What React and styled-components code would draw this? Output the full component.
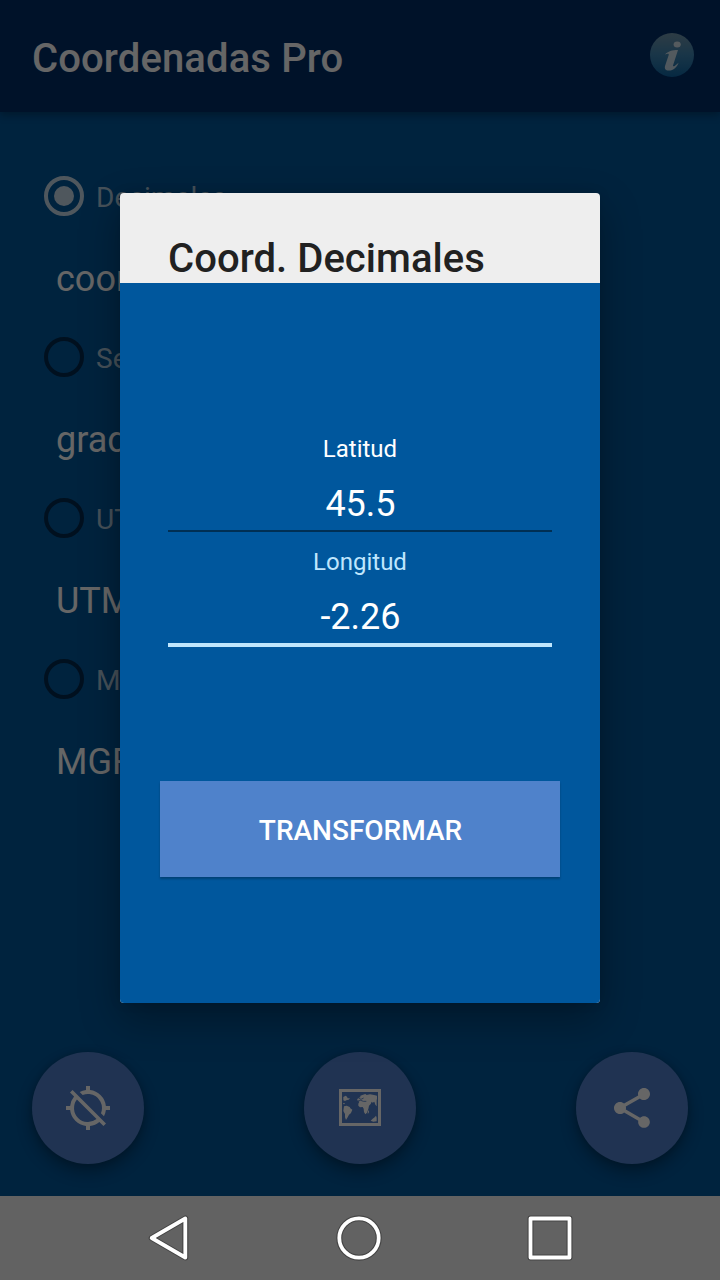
import React, { useState } from "react";
import styled, { createGlobalStyle } from "styled-components";
import { MdLocationDisabled, MdShare } from "react-icons/md";

const options = [
  { id: "dec", label: "Decimales", text: "coord" },
  { id: "sex", label: "Sexagesimales", text: "grados" },
  { id: "utm", label: "UTM", text: "UTM" },
  { id: "mgrs", label: "MGRS", text: "MGRS" },
];

function InfoIcon() {
  return (
    <svg width="46" height="46" viewBox="0 0 46 46">
      <defs>
        <linearGradient id="info" x1="0" y1="0" x2="0" y2="1">
          <stop offset="0" stopColor="#7397ab" />
          <stop offset="0.5" stopColor="#3f86b4" />
          <stop offset="1" stopColor="#0f66a5" />
        </linearGradient>
      </defs>
      <circle cx="23" cy="23" r="22" fill="url(#info)" />
      <ellipse cx="28.200" cy="12.500" rx="3.600" ry="3" fill="#fff" opacity="0.75" />
      <path
        d="M16 22.500c3-3.300 7-4.500 13-4.500l-5 15.500c-.2 1 .8 1 1.600.400l4-3.200c-1.500 4-5 7.800-9.800 7.800-3.500 0-4.500-1.900-3.700-4.800l3.600-10.700c.4-1.500-1-1.500-3.700-.500z"
        fill="#fff"
        opacity="0.75"
      />
    </svg>
  );
}

function MapIcon() {
  return (
    <svg width="42" height="37" viewBox="147 147 126 111">
      <rect x="151.500" y="151.500" width="117" height="102" fill="none" stroke="#fff" strokeWidth="9" />
      <g fill="#fff">
        <path d="M160 171l7-4 4 3 2 5 7 0-4 4-7 2-4 2-5-2z" />
        <path d="M159 189l4 0 2 3-4 1z" />
        <path d="M162 199l8-2 9 4 2 4 6 4-4 10-6 5-4 8-5 8-3-8 0-10-5-9z" />
        <path d="M201 180l3-5 8-4-2-3 7-3 9-3 4 3 10-2 12 2 9 2 0 9-1 5 0 18-4-5-3-9-5 3-3-3-3 7-5 5-2 10-4 11-5 5-4-7-1-10-3-5-8 1-5-5 0-6 3-6z" />
        <path d="M234 213l3-2-1 8-3 2z" />
        <path d="M242 242l6-6 6-4 4-5 2 6 0 11-10 1z" />
      </g>
      <path d="M203 183l9-2 8 3 9 0M205 174l8 4 8-4" fill="none" stroke="#5080cd" strokeWidth="2.500" />
    </svg>
  );
}

function NavIcon({ children }) {
  return (
    <svg width="48" height="48" viewBox="0 0 48 48" fill="none" strokeLinejoin="round">
      <g stroke="#444" strokeWidth="6">{children}</g>
      <g stroke="#fff" strokeWidth="3.800">{children}</g>
    </svg>
  );
}

function App() {
  const [selected, setSelected] = useState("dec");

  return (
    <Screen>
      <GlobalStyle />
      <Content>
        <AppBar>
          <Heading>Coordenadas Pro</Heading>
          <InfoIcon />
        </AppBar>
        <OptionList>
          {options.map((option) => (
            <li key={option.id}>
              <OptionRow onClick={() => setSelected(option.id)}>
                <Radio $checked={selected === option.id} />
                <span>{option.label}</span>
              </OptionRow>
              <OptionText>{option.text}</OptionText>
            </li>
          ))}
        </OptionList>
        <Actions>
          <Fab>
            <MdLocationDisabled size={48} />
          </Fab>
          <Fab $lift={1}>
            <MapIcon />
          </Fab>
          <Fab>
            <MdShare size={48} />
          </Fab>
        </Actions>
        <Scrim>
          <Dialog>
            <DialogTitle>Coord. Decimales</DialogTitle>
            <DialogBody>
              <Field>
                <Label>Latitud</Label>
                <Value>45.5</Value>
              </Field>
              <Field $active>
                <Label $active>Longitud</Label>
                <Value>-2.26</Value>
              </Field>
              <Submit>Transformar</Submit>
            </DialogBody>
          </Dialog>
        </Scrim>
      </Content>
      <NavBar>
        <NavIcon>
          <path d="M7.700 24L41.300 4.500V43.500Z" />
        </NavIcon>
        <NavIcon>
          <circle cx="24" cy="24" r="19.700" />
        </NavIcon>
        <NavIcon>
          <rect x="4.500" y="4.500" width="39" height="39" />
        </NavIcon>
      </NavBar>
    </Screen>
  );
}

const GlobalStyle = createGlobalStyle`
  * {
    box-sizing: border-box;
  }

  body {
    margin: 0;
    font-family: Roboto, "Liberation Sans", sans-serif;
  }

  svg {
    display: block;
  }
`;

const Screen = styled.div`
  display: flex;
  flex-direction: column;
  width: 720px;
  height: 1280px;
  overflow: hidden;
`;

const Content = styled.main`
  position: relative;
  flex: 1;
  display: flex;
  flex-direction: column;
  background: #01579b;
`;

const AppBar = styled.header`
  display: flex;
  justify-content: space-between;
  align-items: center;
  height: 112px;
  padding: 0 25px 3px 32px;
  background: #002d68;
  box-shadow: 0 3px 8px rgba(0, 0, 0, 0.3);
`;

const Heading = styled.h1`
  margin: 0;
  padding-top: 8px;
  font-size: 40px;
  font-weight: 500;
  line-height: 48px;
  letter-spacing: 0.12px;
  color: #fff;
`;

const OptionList = styled.ul`
  flex: 1;
  margin: 0;
  padding: 64px 44px 0;
  list-style: none;
`;

const OptionRow = styled.label`
  display: flex;
  align-items: center;
  gap: 12px;
  height: 40px;
  font-size: 28px;
  line-height: 40px;
  color: rgba(255, 255, 255, 0.7);

  span {
    padding-top: 4px;
  }
`;

const Radio = styled.i`
  width: 40px;
  height: 40px;
  border: 4px solid ${(p) => (p.$checked ? "#c6d9e8" : "#002a4e")};
  border-radius: 50%;
  background: ${(p) => (p.$checked ? "#c6d9e8" : "transparent")};
  background-clip: content-box;
  padding: 6px;
`;

const OptionText = styled.p`
  margin: 41px 0 36px 12px;
  font-size: 36px;
  line-height: 44px;
  color: #fff;
`;

const Actions = styled.div`
  display: flex;
  justify-content: space-between;
  padding: 0 32px 32px;
`;

const Fab = styled.button`
  display: flex;
  align-items: center;
  justify-content: center;
  width: 112px;
  height: 112px;
  padding: 0 0 ${(p) => p.$lift || 0}px;
  border: 0;
  border-radius: 50%;
  background: #5080cd;
  color: #fff;
  box-shadow: 0 8px 16px rgba(0, 0, 0, 0.32), 0 0 6px rgba(0, 0, 0, 0.15);
`;

const Scrim = styled.div`
  position: absolute;
  inset: 0;
  display: flex;
  justify-content: center;
  align-items: center;
  background: rgba(0, 0, 0, 0.6);
`;

const Dialog = styled.section`
  display: flex;
  flex-direction: column;
  width: 480px;
  height: 810px;
  border-radius: 4px;
  overflow: hidden;
  background: #eee;
  box-shadow: 0 16px 40px rgba(0, 0, 0, 0.32), 0 0 12px rgba(0, 0, 0, 0.1);
`;

const DialogTitle = styled.h2`
  margin: 0;
  height: 90px;
  padding: 42px 48px 0;
  font-size: 40px;
  font-weight: 500;
  line-height: 48px;
  letter-spacing: 0.05px;
  color: #212121;
`;

const DialogBody = styled.div`
  flex: 1;
  padding: 150px 40px 0;
  background: #00579d;
`;

const Field = styled.div`
  margin: 0 8px;
  height: ${(p) => (p.$active ? 115 : 99)}px;
  padding-top: ${(p) => (p.$active ? 14 : 0)}px;
  border-bottom: ${(p) => (p.$active ? "4px solid #bfe6fd" : "2px solid #002f54")};
  text-align: center;
  color: #fff;
`;

const Label = styled.div`
  font-size: 24px;
  line-height: 32px;
  color: ${(p) => (p.$active ? "#bfe6fd" : "#fff")};
`;

const Value = styled.div`
  margin-top: 17px;
  padding-left: 1px;
  font-size: 36px;
  line-height: 44px;
`;

const Submit = styled.button`
  display: block;
  width: 100%;
  height: 96px;
  margin-top: 134px;
  padding: 2px 0 0 1px;
  border: 0;
  background: #4f82cb;
  box-shadow: 0 2px 2px rgba(0, 0, 0, 0.25);
  font-family: inherit;
  font-size: 28px;
  font-weight: 500;
  text-transform: uppercase;
  color: #fff;
`;

const NavBar = styled.nav`
  display: flex;
  justify-content: center;
  align-items: center;
  gap: 143px;
  height: 84px;
  padding-right: 2px;
  background: #626262;
`;

export default App;
